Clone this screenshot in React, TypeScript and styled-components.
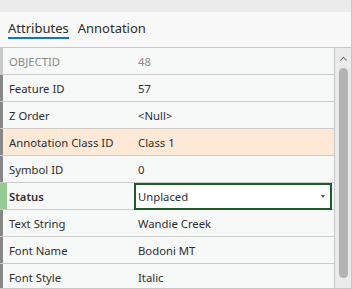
import React from 'react';
import styled, { createGlobalStyle } from 'styled-components';

const GlobalStyle = createGlobalStyle`
  html, body {
    margin: 0;
    padding: 0;
    background: #f8f8f8;
  }
  body {
    font-family: 'Noto Sans', 'Open Sans', sans-serif;
  }
`;

const Panel = styled.div`
  display: flex;
  flex-direction: column;
  width: 352px;
  height: 289px;
  box-sizing: border-box;
  border-right: 1px solid #c6c6c6;
  background: #f8f8f8;
  overflow: hidden;
`;

const TopStrip = styled.div`
  height: 12px;
  background: #ebebeb;
`;

const TabBar = styled.div`
  display: flex;
  align-items: flex-end;
  gap: 9px;
  height: 35px;
  padding-left: 8px;
  box-sizing: border-box;
`;

const Tab = styled.div<{ $active?: boolean }>`
  font-size: 13px;
  color: #2b2b2b;
  line-height: 18px;
  border-bottom: 2px solid ${(p) => (p.$active ? '#0a78c9' : 'transparent')};
  margin-bottom: 8px;
`;

const Body = styled.div`
  display: flex;
  flex: 1;
  border-top: 1px solid #c8c8c8;
  border-bottom: 1px solid #c8c8c8;
  min-height: 0;
`;

const Table = styled.div`
  flex: 1;
  overflow: hidden;
`;

const Row = styled.div<{ $highlight?: boolean; $marker?: 'normal' | 'active' | 'light' }>`
  display: grid;
  grid-template-columns: 134px 1fr;
  height: 26px;
  border-bottom: 1px solid #cbcbcb;
  background: ${(p) => (p.$highlight ? '#fde9d6' : '#f7f8f8')};
  box-shadow: ${(p) =>
    p.$marker === 'active'
      ? 'inset 7px 0 0 #96cb96'
      : p.$marker === 'light'
        ? 'inset 3px 0 0 #c9c9c9'
        : 'inset 3px 0 0 #878787'};
`;

const Cell = styled.div<{ $muted?: boolean; $bold?: boolean }>`
  display: flex;
  align-items: center;
  font-size: 11.3px;
  color: ${(p) => (p.$muted ? '#8a8a8a' : '#2e2e2e')};
  font-weight: ${(p) => (p.$bold ? 600 : 400)};
  white-space: nowrap;
`;

const LabelCell = styled(Cell)`
  padding-left: 9px;
`;

const ValueCell = styled(Cell)`
  padding-left: 4px;
`;

const Dropdown = styled.div`
  display: flex;
  align-items: center;
  justify-content: space-between;
  margin-right: 2px;
  box-sizing: border-box;
  height: 27px;
  border: 2px solid #1c5a27;
  background: #ffffff;
  padding: 0 5px 0 2px;
  font-size: 11.3px;
  color: #2e2e2e;
  position: relative;
  z-index: 1;
`;

const Caret = styled.span`
  width: 0;
  height: 0;
  border-left: 2.5px solid transparent;
  border-right: 2.5px solid transparent;
  border-top: 3px solid #555;
`;

const ScrollBar = styled.div`
  display: flex;
  flex-direction: column;
  align-items: center;
  width: 17px;
  border-left: 1px solid #c8c8c8;
  background: #ebebeb;
  padding-top: 8px;
  box-sizing: border-box;
`;

const ArrowUp = styled.svg`
  width: 7px;
  height: 5px;
  margin-bottom: 7px;
`;

const Thumb = styled.div`
  width: 9px;
  height: 210px;
  border-radius: 5px;
  background: #b3b3b3;
`;

type Field = { label: string; value: string; muted?: boolean; highlight?: boolean };

const fields: Field[] = [
  { label: 'OBJECTID', value: '48', muted: true },
  { label: 'Feature ID', value: '57' },
  { label: 'Z Order', value: '<Null>' },
  { label: 'Annotation Class ID', value: 'Class 1', highlight: true },
  { label: 'Symbol ID', value: '0' },
  { label: 'Status', value: 'Unplaced' },
  { label: 'Text String', value: 'Wandie Creek' },
  { label: 'Font Name', value: 'Bodoni MT' },
  { label: 'Font Style', value: 'Italic' },
];

export default function App(): JSX.Element {
  return (
    <>
      <GlobalStyle />
      <Panel>
        <TopStrip />
        <TabBar>
          <Tab $active>Attributes</Tab>
          <Tab>Annotation</Tab>
        </TabBar>
        <Body>
          <Table>
            {fields.map((f) => {
              const isStatus = f.label === 'Status';
              return (
                <Row
                  key={f.label}
                  $highlight={f.highlight}
                  $marker={isStatus ? 'active' : f.muted ? 'light' : 'normal'}
                >
                  <LabelCell $muted={f.muted} $bold={isStatus}>
                    {f.label}
                  </LabelCell>
                  {isStatus ? (
                    <Dropdown>
                      {f.value}
                      <Caret />
                    </Dropdown>
                  ) : (
                    <ValueCell $muted={f.muted}>{f.value}</ValueCell>
                  )}
                </Row>
              );
            })}
          </Table>
          <ScrollBar>
            <ArrowUp viewBox="0 0 7 5">
              <path d="M0.5 4.5 L3.5 1.2 L6.5 4.5" fill="none" stroke="#6a6a6a" strokeWidth="1.1" />
            </ArrowUp>
            <Thumb />
          </ScrollBar>
        </Body>
      </Panel>
    </>
  );
}
